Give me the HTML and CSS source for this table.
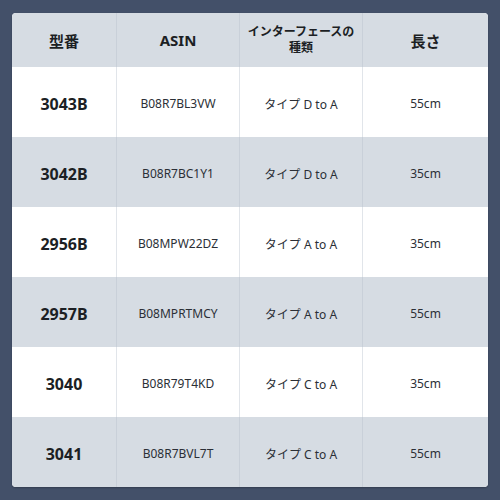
FILE: index.html
```html
<!DOCTYPE html>
<html lang="ja">
<head>
<meta charset="utf-8">
<link rel="stylesheet" href="styles.css">
</head>
<body>
<div class="card">
  <div class="row head">
    <div class="cell">型番</div>
    <div class="cell">ASIN</div>
    <div class="cell small">インターフェースの<br>種類</div>
    <div class="cell">長さ</div>
  </div>
  <div class="row">
    <div class="cell model">3043B</div>
    <div class="cell">B08R7BL3VW</div>
    <div class="cell">タイプ D to A</div>
    <div class="cell">55cm</div>
  </div>
  <div class="row alt">
    <div class="cell model">3042B</div>
    <div class="cell">B08R7BC1Y1</div>
    <div class="cell">タイプ D to A</div>
    <div class="cell">35cm</div>
  </div>
  <div class="row">
    <div class="cell model">2956B</div>
    <div class="cell">B08MPW22DZ</div>
    <div class="cell">タイプ A to A</div>
    <div class="cell">35cm</div>
  </div>
  <div class="row alt">
    <div class="cell model">2957B</div>
    <div class="cell">B08MPRTMCY</div>
    <div class="cell">タイプ A to A</div>
    <div class="cell">55cm</div>
  </div>
  <div class="row">
    <div class="cell model">3040</div>
    <div class="cell">B08R79T4KD</div>
    <div class="cell">タイプ C to A</div>
    <div class="cell">35cm</div>
  </div>
  <div class="row alt last">
    <div class="cell model">3041</div>
    <div class="cell">B08R7BVL7T</div>
    <div class="cell">タイプ C to A</div>
    <div class="cell">55cm</div>
  </div>
</div>
</body>
</html>
```
FILE: styles.css
```css
html, body {
  margin: 0;
  padding: 0;
  background: #435069;
}
body {
  width: 500px;
  height: 500px;
  padding: 13px 12px;
  box-sizing: border-box;
  font-family: "Noto Sans", "Noto Sans CJK JP", sans-serif;
}
.card {
  width: 476px;
  height: 474px;
  background: #ffffff;
  border-radius: 4px;
  overflow: hidden;
  box-shadow: 0 1px 2px rgba(0, 0, 0, 0.25);
}
.row {
  display: grid;
  grid-template-columns: 104px 123px 123px 126px;
  height: 70px;
  background: #ffffff;
}
.row.head {
  height: 54px;
  background: #d6dce3;
}
.row.alt {
  background: #d6dce3;
}
.cell {
  display: flex;
  align-items: center;
  justify-content: center;
  text-align: center;
  font-size: 12px;
  color: #2b2f36;
  border-left: 1px solid #e1e5ea;
  padding-top: 3px;
}
.row.alt .cell,
.row.head .cell {
  border-left-color: #c9d0d9;
}
.row.head .cell {
  padding-top: 0;
}
.cell:first-child {
  border-left: none;
}
.head .cell {
  font-size: 15px;
  font-weight: 700;
  color: #1c1f24;
}
.head .cell.small {
  font-size: 12px;
  line-height: 16px;
}
.cell.model {
  font-size: 16px;
  font-weight: 700;
  color: #1c1f24;
}
```
